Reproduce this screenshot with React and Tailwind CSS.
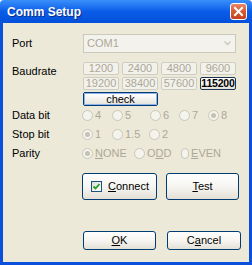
import React from "react";

const baud = ["1200", "2400", "4800", "9600", "19200", "38400", "57600", "115200"];

function Radio({ label, checked, width, u }) {
  return (
    <div className="flex items-center shrink-0" style={{ width }}>
      <div className="w-[11px] h-[11px] rounded-full border border-[#CAC8BB] bg-[#F4F3EC] flex items-center justify-center">
        {checked && <div className="w-[5px] h-[5px] rounded-full bg-[#C4C2B4]" />}
      </div>
      <span className="ml-[2px] text-[11px] leading-none text-[#ACA899]">{label}</span>
    </div>
  );
}

function XPButton({ className, children }) {
  return (
    <div
      className={
        "border border-[#003C74] rounded-[3px] bg-gradient-to-b from-[#FFFFFF] via-[#F6F5F1] to-[#E3E0D6] flex items-center justify-center text-[11px] leading-none text-black " +
        className
      }
    >
      {children}
    </div>
  );
}

export default function App() {
  return (
    <div className="w-[252px] h-[265px] flex flex-col overflow-hidden font-['Liberation_Sans',Arial,sans-serif] bg-white">
      {/* Title bar */}
      <div className="h-[23px] shrink-0 flex items-center justify-between pl-[7px] pr-[5px] rounded-t-[4px] bg-gradient-to-b from-[#3A8FFA] via-[#0A5CE8] to-[#0350DA]">
        <span className="text-white font-bold text-[12px] leading-none [text-shadow:1px_1px_0_#0A2C8A]">Comm Setup</span>
        <div className="w-[17px] h-[17px] rounded-[3px] border border-white bg-gradient-to-b from-[#E8876A] via-[#D8592F] to-[#C2401A] flex items-center justify-center">
          <svg width="11" height="11" viewBox="0 0 11 11">
            <path d="M2 2 L9 9 M9 2 L2 9" stroke="white" strokeWidth="2" strokeLinecap="square" />
          </svg>
        </div>
      </div>

      {/* Body */}
      <div className="flex-1 bg-[#ECE9D8] border-x-[3px] border-b-[3px] border-[#0B50DC] pl-[9px] flex flex-col">
        {/* Port */}
        <div className="mt-[11px] h-[19px] flex items-center">
          <div className="w-[71px] text-[11px] leading-none text-black">Port</div>
          <div className="w-[153px] h-[19px] border border-[#CBC9BC] bg-[#F3F2EC] flex items-center justify-between pl-[3px] pr-[4px]">
            <span className="text-[11px] leading-none text-[#ACA899]">COM1</span>
            <svg width="7" height="5" viewBox="0 0 7 5">
              <path d="M0.5 0.5 L3.5 3.5 L6.5 0.5" stroke="#C8C6B9" strokeWidth="1.3" fill="none" />
            </svg>
          </div>
        </div>

        {/* Baudrate */}
        <div className="mt-[9px] flex items-start">
          <div className="w-[71px] pt-[4px] text-[11px] leading-none text-black">Baudrate</div>
          <div className="flex flex-col">
            <div className="w-[153px] grid grid-cols-4 gap-x-[3px] gap-y-[2px]">
              {baud.map((b) =>
                b === "115200" ? (
                  <div
                    key={b}
                    className="h-[13px] border border-[#1C3553] rounded-[2px] bg-gradient-to-b from-white to-[#E4E2DA] flex items-center justify-center text-[10.5px] font-bold leading-none text-black tracking-[-0.2px]"
                  >
                    {b}
                  </div>
                ) : (
                  <div
                    key={b}
                    className="h-[13px] border border-[#CFCDC1] rounded-[2px] bg-[#F2F1EA] flex items-center justify-center text-[11px] leading-none text-[#ACA899]"
                  >
                    {b}
                  </div>
                )
              )}
            </div>
            <div className="mt-[2px] w-[75px] h-[14px] border border-[#003C74] rounded-[2px] bg-white flex">
              <div className="flex-1 border border-[#8FB0E8] bg-gradient-to-b from-white to-[#E6E4DC] flex items-center justify-center text-[11px] leading-none text-black">
                check
              </div>
            </div>
          </div>
        </div>

        {/* Data bit */}
        <div className="h-[19px] flex items-center">
          <div className="w-[70px] text-[11px] leading-none text-black">Data bit</div>
          <Radio label="4" width={30} />
          <Radio label="5" width={38} />
          <Radio label="6" width={29} />
          <Radio label="7" width={29} />
          <Radio label="8" width={30} checked />
        </div>
        {/* Stop bit */}
        <div className="h-[19px] flex items-center">
          <div className="w-[70px] text-[11px] leading-none text-black">Stop bit</div>
          <Radio label="1" width={30} checked />
          <Radio label="1.5" width={37} />
          <Radio label={<u className="no-underline">2</u>} width={30} />
        </div>
        {/* Parity */}
        <div className="h-[19px] flex items-center">
          <div className="w-[70px] text-[11px] leading-none text-black">Parity</div>
          <Radio label={<span><u>N</u>ONE</span>} width={52} checked />
          <Radio label={<span>O<u>D</u>D</span>} width={47} />
          <Radio label={<span><u>E</u>VEN</span>} width={40} />
        </div>

        {/* Connect / Test */}
        <div className="mt-[10px] flex pl-[70px] gap-[9px]">
          <XPButton className="w-[75px] h-[27px] justify-start pl-[8px]">
            <div className="w-[11px] h-[11px] border border-[#1C5180] bg-gradient-to-br from-[#DCDCD6] to-white flex items-center justify-center">
              <svg width="9" height="9" viewBox="0 0 9 9">
                <path d="M1.5 4.5 L3.5 6.5 L7.5 2" stroke="#21A121" strokeWidth="1.8" fill="none" />
              </svg>
            </div>
            <span className="ml-[6px]">
              <u>C</u>onnect
            </span>
          </XPButton>
          <XPButton className="w-[73px] h-[27px]">
            <span>
              <u>T</u>est
            </span>
          </XPButton>
        </div>

        {/* OK / Cancel */}
        <div className="mt-[31px] flex pl-[71px] gap-[11px]">
          <XPButton className="w-[73px] h-[19px]">
            <span>
              <u>O</u>K
            </span>
          </XPButton>
          <XPButton className="w-[74px] h-[19px]">
            <span>
              C<u>a</u>ncel
            </span>
          </XPButton>
        </div>
      </div>
    </div>
  );
}
